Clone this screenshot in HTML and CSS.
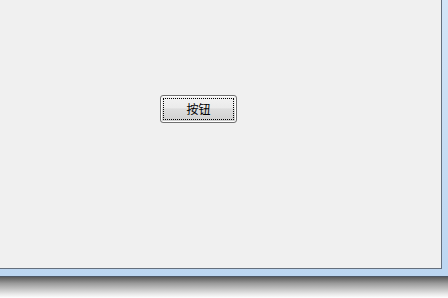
FILE: index.html
```html
<html>
    <head>
        <link rel="stylesheet" href="styles.css">
    </head>
    <body>
        <div id="frame">
            <div id="client">
                <button class="btn"><span class="focus">按钮</span></button>
            </div>
        </div>
        <div class="shadow"></div>
    </body>
</html>
```
FILE: styles.css
```css
body {
    margin: 0;
    background-color: #ffffff;
    font-family: "Noto Sans CJK SC", "DejaVu Sans", sans-serif;
}

#frame {
    height: 276px;
    background: linear-gradient(#d3e5f7, #bcd6f1);
    border-bottom: 1px solid #4c5766;
}

#client {
    box-sizing: border-box;
    width: 442px;
    height: 269px;
    padding: 95px 0 0 160px;
    background-color: #f0f0f0;
    border-right: 1px solid #646f7d;
    border-bottom: 1px solid #646f7d;
}

.btn {
    display: flex;
    box-sizing: border-box;
    width: 77px;
    height: 28px;
    padding: 2px;
    margin: 0;
    border: 1px solid #707070;
    border-radius: 3px;
    background: linear-gradient(#f2f2f2 0%, #ebebeb 45%, #dddddd 50%, #cfcfcf 100%);
    box-shadow: inset 0 0 0 1px #fcfcfc;
    font-family: inherit;
    font-size: 12px;
    color: #000000;
}

.focus {
    flex: 1;
    display: flex;
    align-items: center;
    justify-content: center;
    border: 1px dotted #000000;
    line-height: 14px;
}

.shadow {
    height: 21px;
    background: linear-gradient(#5a5a5a, #9a9a9a 30%, #e6e6e6 80%, #ffffff);
}
```
